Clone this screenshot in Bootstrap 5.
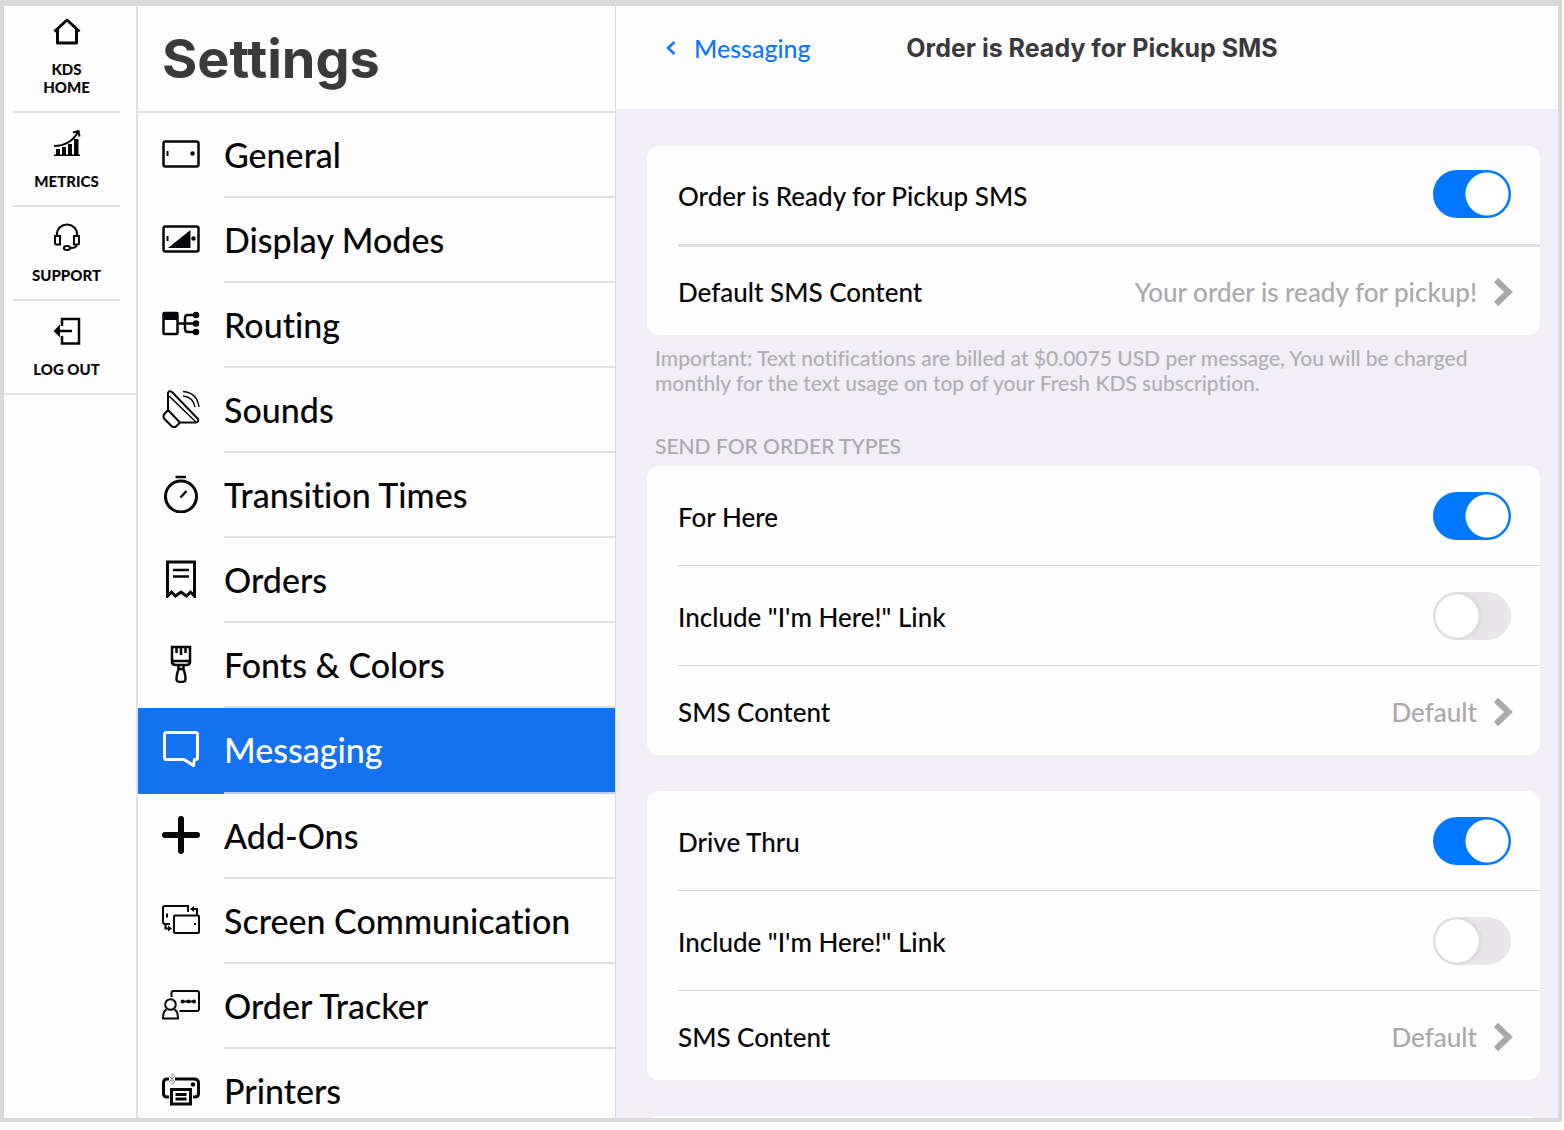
<!DOCTYPE html>
<html lang="en">
<head>
<meta charset="utf-8">
<meta name="viewport" content="width=device-width, initial-scale=1">
<title>Settings - Order is Ready for Pickup SMS</title>
<link href="https://cdn.jsdelivr.net/npm/bootstrap@5.3.0/dist/css/bootstrap.min.css" rel="stylesheet">
<style>
  body { font-family: Lato, sans-serif; font-weight: 500; font-variant-ligatures: none; color: #060608; background: #fff; padding: 0 2px 8px 0; height: 100vh; overflow: hidden; }
  .app-frame { border: 4px solid #dbd9dc; border-top-width: 6px; background: #fefdfe; }
  svg { display: block; fill: none; stroke: currentColor; stroke-width: 2; flex: none; }
  svg .solid { fill: currentColor; }

  /* left rail */
  .rail { width: 134px; border-right: 2px solid #e3e1e4; }
  .rail-nav { border-bottom: 2px solid #e3e1e4; }
  .rail-link { margin: 0 16px 0 9px; padding: 11px 0 15px; gap: 15px; border-bottom: 2px solid #e0dee0; font-size: 15px; line-height: 18px; font-weight: 900; color: inherit; text-align: center; text-decoration: none; }
  .rail-link + .rail-link { padding-top: 16px; }
  .rail-link:last-child { border-bottom: 0; }

  /* settings list */
  .menu-pane { width: 478px; border-right: 1px solid #dad8dc; }
  .menu-head { height: 107px; padding: 0 24px; border-bottom: 2px solid #e3e1e4; }
  .menu-head h1 { font: 700 54px/64px Inter, sans-serif; color: #3b393c; margin: 0; }
  .menu-link { height: 85px; padding-left: 24px; gap: 24px; font-size: 34px; line-height: 42px; color: inherit; text-decoration: none; }
  .menu-link svg { margin-bottom: 4px; }
  .menu-link span { border-bottom: 2px solid #e1dfe2; }
  .menu-link.current { height: 86px; background: #1471ef; color: #fff; }
  .menu-link.current span { border-color: #b9cdf5; }

  /* detail pane */
  .detail { background: #f1eef6; }
  .detail-head { display: grid; grid-template-columns: 1fr auto 1fr; height: 103px; padding: 0 40px 20px 50px; background: #fefdfe; }
  .back-link { gap: 18px; font-size: 25px; line-height: 36px; color: #0a76f8; text-decoration: none; }
  .detail-head h2 { font: 700 25px/32px Inter, sans-serif; color: #3b393c; margin: 0; }
  .detail-body { padding: 37px 18px 0 31px; }
  .panel { background: #fefdfe; border-radius: 12px; padding-left: 31px; margin-bottom: 36px; }
  .panel-row { height: 100px; padding-right: 29px; border-bottom: 1px solid #dbd9dd; font-size: 26px; line-height: 32px; color: inherit; text-decoration: none; }
  .panel-row label { padding-top: 2px; }
  .panel-row:last-child { height: 89px; border-bottom: 0; }
  a.panel-row { padding-right: 27px; }
  a.panel-row > span { padding-top: 2px; }
  .panel-main { margin-bottom: 10px; }
  .panel-main .panel-row:first-child { height: 101px; padding-bottom: 2px; border-bottom: 3px solid #e0dee1; }
  .panel-main .panel-row:first-child label { padding-top: 4px; }
  .panel-main .panel-row:last-child { height: 88px; }
  .row-value { gap: 16px; color: #aaa8ac; }
  .hint { margin: 0 8px; font-size: 21px; line-height: 25px; color: #b0adb4; }
  .group-title { margin: 37px 8px 6px; font-size: 21px; line-height: 28px; font-weight: 500; color: #aaa7ae; }
  .toggle.form-check-input { width: 78px; height: 48px; margin: 0; border: 0; border-radius: 24px; box-shadow: none; background-color: #e8e6e9; background-size: 100% 100%; background-position: 0 0;
    background-image: radial-gradient(circle at 24px 24px, #fff 21px, #dcdadd 22px, #e8e6e9 27px); }
  .toggle.form-check-input:checked { background-color: #0077ff; background-image: radial-gradient(circle at 54px 24px, #fff 21px, #0077ff 22px); }
</style>
<script src="https://cdn.jsdelivr.net/npm/bootstrap@5.3.0/dist/js/bootstrap.bundle.min.js"></script>
</head>
<body>
<div class="app-frame d-flex h-100 overflow-hidden">

  <aside class="rail flex-shrink-0">
    <nav class="rail-nav d-flex flex-column" aria-label="Main">
      <a class="rail-link d-flex flex-column align-items-center" href="#home">
        <svg width="28" height="28" viewBox="0 0 28 28" style="stroke-width:3"><path d="M1.500 14.500 14 3l12.500 11.500M4.500 12v14h19V12" stroke-linejoin="round"/></svg>
        <span>KDS<br>HOME</span>
      </a>
      <a class="rail-link d-flex flex-column align-items-center" href="#metrics">
        <svg width="28" height="28" viewBox="0 0 28 28"><path class="solid" stroke="none" d="M3 20h4v6H3zM9 18h4v8H9zM15 15h4v11h-4zM21 10h4.500v16H21zM1 25.500h26V27H1z"/><path d="M1 17c10 0 19-5 24-14M20 3.500l5.500-1.500 1 5.500"/></svg>
        <span>METRICS</span>
      </a>
      <a class="rail-link d-flex flex-column align-items-center" href="#support">
        <svg width="28" height="28" viewBox="0 0 28 28"><path d="M4 13V11a10 9.500 0 0 1 20 0v2M2 13h5v8.500H3.500A1.500 1.500 0 0 1 2 20zM21 13h5v7a1.500 1.500 0 0 1-1.500 1.500H21zM23.500 22c0 2-2 3-6 3"/><ellipse cx="14" cy="25" rx="3.200" ry="2"/></svg>
        <span>SUPPORT</span>
      </a>
      <a class="rail-link d-flex flex-column align-items-center" href="#logout">
        <svg width="28" height="28" viewBox="0 0 28 28"><path d="M9 9V2h17v24.500H9V19M3 14h16" style="stroke-width:2.500"/><path class="solid" d="M2 14l4-4v8z"/></svg>
        <span>LOG OUT</span>
      </a>
    </nav>
  </aside>

  <section class="menu-pane flex-shrink-0">
    <header class="menu-head d-flex align-items-center"><h1>Settings</h1></header>
    <nav aria-label="Settings">
      <a class="menu-link d-flex align-items-center" href="#general">
        <svg width="38" height="38" viewBox="0 0 38 38" style="stroke-width:2.500"><rect x="1.500" y="6.500" width="35" height="25" rx="2"/><path d="M5.500 16v5" style="stroke-width:2"/><circle class="solid" cx="30.500" cy="18.500" r="1"/></svg>
        <span class="flex-grow-1 h-100 d-flex align-items-center">General</span></a>
      <a class="menu-link d-flex align-items-center" href="#display">
        <svg width="38" height="38" viewBox="0 0 38 38" style="stroke-width:2.500"><rect x="1.500" y="6.500" width="35" height="25" rx="2"/><path d="M5.500 16v5" style="stroke-width:2"/><path class="solid" stroke="none" d="M6 28 28.500 10v18z"/><circle class="solid" cx="31.500" cy="18.500" r="1"/></svg>
        <span class="flex-grow-1 h-100 d-flex align-items-center">Display Modes</span></a>
      <a class="menu-link d-flex align-items-center" href="#routing">
        <svg width="38" height="38" viewBox="0 0 38 38" style="stroke-width:2.500"><rect x="1.500" y="8" width="14" height="21" rx="1"/><path class="solid" stroke="none" d="M1 7h15v8H1z"/><path d="M16 18.500h18M34 10h-8q-3 0-3 3v11q0 3 3 3h8"/><circle class="solid" cx="34" cy="10" r="2"/><circle class="solid" cx="34" cy="18.500" r="2"/><circle class="solid" cx="34" cy="27" r="2"/></svg>
        <span class="flex-grow-1 h-100 d-flex align-items-center">Routing</span></a>
      <a class="menu-link d-flex align-items-center" href="#sounds">
        <svg width="38" height="38" viewBox="0 0 38 38" stroke-linejoin="round"><path d="M6 20V3q1-3 4-1l26 27q1 3-2 3.500H18l-4 4q-2 1-4 0l-8-8q-1-2 0-4zM6 20l12 12.500"/><path d="M7 6l27 26" style="stroke-width:1.500"/><path d="M21 1.500q14 1 16 15.500M21 6q10 1 12 11" style="stroke-width:1.500"/></svg>
        <span class="flex-grow-1 h-100 d-flex align-items-center">Sounds</span></a>
      <a class="menu-link d-flex align-items-center" href="#times">
        <svg width="38" height="38" viewBox="0 0 38 38"><circle cx="19" cy="21.500" r="15.500" style="stroke-width:3"/><path d="M13.500 2H24M18.500 22.500l6-6.500" style="stroke-width:2.500"/></svg>
        <span class="flex-grow-1 h-100 d-flex align-items-center">Transition Times</span></a>
      <a class="menu-link d-flex align-items-center" href="#orders">
        <svg width="38" height="38" viewBox="0 0 38 38" style="stroke-width:3"><path d="M5.500 36V2h27v34l-4-4-4 4-5.500-4-5.500 4-4-4z"/><path d="M11 10h16M11 16.500h16" style="stroke-width:2.500"/></svg>
        <span class="flex-grow-1 h-100 d-flex align-items-center">Orders</span></a>
      <a class="menu-link d-flex align-items-center" href="#fonts">
        <svg width="38" height="38" viewBox="0 0 38 38" style="stroke-width:2.500"><path d="M10 2h18v15q0 3-4 3H14q-4 0-4-3zM10 16h18M14.500 2v6M19 2v8M23.500 2v6M16.500 20v4q-3 9-1.500 12 4 2 8 0 1.500-3-1.500-12v-4M16.500 24h5"/></svg>
        <span class="flex-grow-1 h-100 d-flex align-items-center">Fonts &amp; Colors</span></a>
      <a class="menu-link current d-flex align-items-center" href="#messaging" aria-current="page">
        <svg width="38" height="38" viewBox="0 0 38 38" style="stroke-width:3" stroke-linejoin="round"><path d="M3.500 2.500h30q2 0 2 2v23q0 2-2 2h-1l-1 6-9.500-6H4.500q-2 0-2-2v-23q0-2 2-2z"/></svg>
        <span class="flex-grow-1 h-100 d-flex align-items-center">Messaging</span></a>
      <a class="menu-link d-flex align-items-center" href="#addons">
        <svg width="38" height="38" viewBox="0 0 38 38" style="stroke-width:6" stroke-linecap="round"><path d="M19 3v32M3 19h32"/></svg>
        <span class="flex-grow-1 h-100 d-flex align-items-center">Add-Ons</span></a>
      <a class="menu-link d-flex align-items-center" href="#screens">
        <svg width="38" height="38" viewBox="0 0 38 38"><path d="M8 23H3q-2 0-2-2V7q0-2 2-2h23v6M5 12.500v4M29 8h6v6M3.500 23v4.500H8"/><rect x="12" y="14.500" width="25" height="17.500" rx="1"/><path class="solid" stroke="none" d="M28 8l4-3v6zM10 27.500l-4-3v6zM32 22h2v2h-2z"/></svg>
        <span class="flex-grow-1 h-100 d-flex align-items-center">Screen Communication</span></a>
      <a class="menu-link d-flex align-items-center" href="#tracker">
        <svg width="38" height="38" viewBox="0 0 38 38"><path d="M9.500 11V7q0-2 2-2H35q2 0 2 2v16q0 2-2 2H17.500M20 15.500h13"/><g stroke="none"><circle class="solid" cx="20.500" cy="15.500" r="2"/><circle class="solid" cx="26.500" cy="15.500" r="2"/><circle class="solid" cx="32" cy="15.500" r="2"/></g><circle cx="8.500" cy="18.500" r="5.300"/><path d="M4.500 23.500Q1 25 1 32.500h15q0-7.500-3.500-9"/></svg>
        <span class="flex-grow-1 h-100 d-flex align-items-center">Order Tracker</span></a>
      <a class="menu-link d-flex align-items-center" href="#printers">
        <svg width="38" height="38" viewBox="0 0 38 38" style="stroke-width:3"><path d="M7 26H5q-3.500 0-3.500-3.500V12Q1.500 8 5 8h2M13 8h19q4.500 0 4.500 4v10.500Q36.500 26 33 26h-2M9.500 18.500h19V33h-19zM13.500 23.500h11M13.500 28h11"/><circle class="solid" stroke="none" cx="31" cy="13.500" r="2.200"/><path d="M7 5l6 6-3 2.500V2.500L13 5l-6 6" stroke="#99979b" style="stroke-width:1"/></svg>
        <span class="flex-grow-1 h-100 d-flex align-items-center">Printers</span></a>
    </nav>
  </section>

  <main class="detail flex-grow-1 overflow-hidden">
    <header class="detail-head align-items-center">
      <a class="back-link d-flex align-items-center" href="#messaging">
        <svg width="10" height="14" viewBox="0 0 10 14" style="stroke-width:2.500"><path d="M8.500 1 2 7l6.500 6"/></svg>
        Messaging</a>
      <h2>Order is Ready for Pickup SMS</h2>
    </header>

    <div class="detail-body">
      <section class="panel panel-main">
        <div class="panel-row d-flex align-items-center justify-content-between">
          <label for="pickup">Order is Ready for Pickup SMS</label>
          <input class="form-check-input toggle" type="checkbox" role="switch" id="pickup" checked>
        </div>
        <a class="panel-row d-flex align-items-center justify-content-between" href="#default-content">
          <span>Default SMS Content</span>
          <span class="row-value d-flex align-items-center">Your order is ready for pickup!
            <svg width="20" height="30" viewBox="0 0 20 30" style="stroke-width:6"><path d="M3 3l12.500 12L3 27"/></svg></span>
        </a>
      </section>
      <p class="hint">Important: Text notifications are billed at $0.0075 USD per message, You will be charged monthly for the text usage on top of your Fresh KDS subscription.</p>

      <h3 class="group-title">SEND FOR ORDER TYPES</h3>
      <section class="panel">
        <div class="panel-row d-flex align-items-center justify-content-between">
          <label for="here">For Here</label>
          <input class="form-check-input toggle" type="checkbox" role="switch" id="here" checked>
        </div>
        <div class="panel-row d-flex align-items-center justify-content-between">
          <label for="here-link">Include "I'm Here!" Link</label>
          <input class="form-check-input toggle" type="checkbox" role="switch" id="here-link">
        </div>
        <a class="panel-row d-flex align-items-center justify-content-between" href="#here-content">
          <span>SMS Content</span>
          <span class="row-value d-flex align-items-center">Default
            <svg width="20" height="30" viewBox="0 0 20 30" style="stroke-width:6"><path d="M3 3l12.500 12L3 27"/></svg></span>
        </a>
      </section>

      <section class="panel">
        <div class="panel-row d-flex align-items-center justify-content-between">
          <label for="drive">Drive Thru</label>
          <input class="form-check-input toggle" type="checkbox" role="switch" id="drive" checked>
        </div>
        <div class="panel-row d-flex align-items-center justify-content-between">
          <label for="drive-link">Include "I'm Here!" Link</label>
          <input class="form-check-input toggle" type="checkbox" role="switch" id="drive-link">
        </div>
        <a class="panel-row d-flex align-items-center justify-content-between" href="#drive-content">
          <span>SMS Content</span>
          <span class="row-value d-flex align-items-center">Default
            <svg width="20" height="30" viewBox="0 0 20 30" style="stroke-width:6"><path d="M3 3l12.500 12L3 27"/></svg></span>
        </a>
      </section>

      <section class="panel"><div class="panel-row"></div></section>
    </div>
  </main>
</div>
</body>
</html>
